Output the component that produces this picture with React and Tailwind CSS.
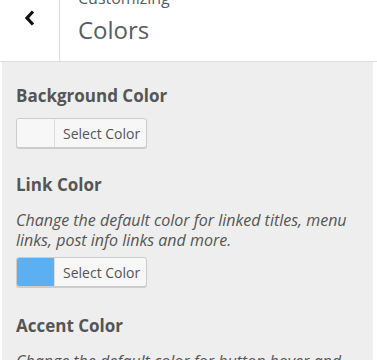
import React from "react";

const font = { fontFamily: '"Open Sans", "Noto Sans", sans-serif' };

function ColorButton({ swatch }) {
    return (
        <div className="flex h-[30px] w-[131px] rounded-[3px] border border-[#cccccc] bg-[#f7f7f7] shadow-[0_1px_0_#cccccc] overflow-hidden">
            <div className={`w-[38px] h-full border-r border-[#dddddd] ${swatch}`}></div>
            <div className="flex-1 flex items-center pl-[8px] text-[14px] text-[#555555]">Select Color</div>
        </div>
    );
}

function Control({ title, description, swatch, className }) {
    return (
        <div className={className}>
            <h3 className="text-[17px] leading-[24px] font-bold text-[#555555]">{title}</h3>
            {description && (
                <p className="mt-[13px] text-[16px] leading-[20px] italic text-[#555555]">{description}</p>
            )}
            {swatch && (
                <div className={description ? "mt-[7px]" : "mt-[10px]"}>
                    <ColorButton swatch={swatch} />
                </div>
            )}
        </div>
    );
}

export default function App() {
    return (
        <div className="w-[377px] h-[360px] overflow-hidden bg-white" style={font}>
            <div className="flex h-[62px] border-b border-[#dddddd]">
                <button className="w-[60px] h-full border-r border-[#dddddd] flex justify-center pt-[10px]">
                    <svg width="12" height="16" viewBox="0 0 12 16">
                        <polyline points="9,1.5 3,8 9,14.5" fill="none" stroke="#111" strokeWidth="3.2" />
                    </svg>
                </button>
                <div className="pl-[18px] mt-[-12px] flex flex-col">
                    <span className="text-[16px] leading-[20px] text-[#555d66]">Customizing</span>
                    <span className="mt-[7px] text-[24px] leading-[30px] text-[#555d66]">Colors</span>
                </div>
            </div>
            <div className="ml-[2px] mr-[4px] h-full bg-[#eeeeee] px-[14px] pt-[22px]">
                <Control title="Background Color" swatch="bg-[#f7f7f7]" />
                <Control
                    className="mt-[25px]"
                    title="Link Color"
                    description="Change the default color for linked titles, menu links, post info links and more."
                    swatch="bg-[#5caff0]"
                />
                <Control
                    className="mt-[27px]"
                    title="Accent Color"
                    description="Change the default color for button hover and"
                />
            </div>
        </div>
    );
}
